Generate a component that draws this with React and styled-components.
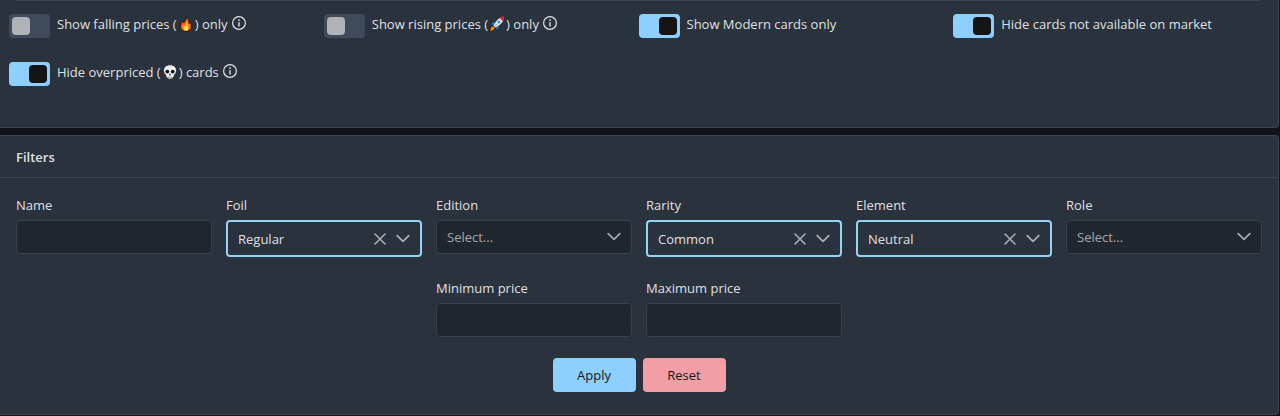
import React, { useState } from 'react'
import styled, { createGlobalStyle, css } from 'styled-components';

const GlobalStyle = createGlobalStyle`
    * {
        box-sizing: border-box;
    }
    body {
        margin: 0;
        background: #101317;
        color: rgba(255, 255, 255, 0.87);
        font-family: 'Open Sans', 'Noto Sans', sans-serif;
        font-size: 13px;
        line-height: 18px;
    }
    button, input, select {
        font: inherit;
        color: inherit;
    }
`

const FireIcon = () => (
    <Emoji viewBox="0 0 16 16" role="img" aria-label="fire">
        <path d="M8.6.6c.3 2-.6 3-1.700 4.300-.5.6-.8 1.200-.9 1.900C5.300 6.400 5 5.700 5 4.900 3.600 6.200 2.400 8 2.400 10.200c0 3.200 2.400 5.400 5.600 5.400s5.600-2.200 5.600-5.300c0-1.900-.7-3.300-1.500-4.400-.1.800-.4 1.300-1 1.700C11.200 4.800 10.700 2.200 8.600.6z" fill="#e8590c" stroke="#151515" strokeWidth=".8" />
        <path d="M8.500 4.200c.5 2 2.900 3.600 2.900 6.300 0 2.300-1.400 4-3.500 4s-3.500-1.500-3.500-3.600c0-1.300.5-2.200 1.100-2.900.2.800.6 1.300 1.200 1.500-.2-2.200 1.800-3 1.800-5.300z" fill="#ff9a1f" />
        <path d="M8.200 9.200c.3 1 1.700 1.700 1.700 3.200 0 1.200-.8 2.200-1.900 2.200s-2-.8-2-2c0-.8.300-1.300.7-1.700.2.400.4.600.8.700-.1-.9.300-1.600.7-2.400z" fill="#ffe867" />
    </Emoji>
)

const RocketIcon = () => (
    <Emoji viewBox="0 0 16 16" role="img" aria-label="rocket">
        <path d="M4.200 10.100c-1.800.3-3 2.300-3.400 5.100 2.600-.1 4.600-1.100 5.200-3.200z" fill="#ff8c1a" stroke="#151515" strokeWidth=".6" />
        <path d="M6.400 5.600C4.300 5.300 2.600 6.400 1.800 8.900l3.200.4zM10.400 9.600c.4 2.200-.8 3.800-3.300 4.600l-.4-3.200z" fill="#1c8fd6" stroke="#151515" strokeWidth=".6" />
        <path d="M15.200.8C10.900.7 7.500 2.900 4 9.700L6.300 12C13 8.600 15.300 5.200 15.200.8z" fill="#dce6ea" stroke="#151515" strokeWidth=".6" />
        <path d="M15.200.8c-1.800 0-3.300.3-4.700 1.100l3.600 3.600c.8-1.400 1.100-2.900 1.100-4.700z" fill="#e0244a" />
        <circle cx="9.900" cy="6.100" r="1.500" fill="#2b9fe0" />
        <path d="M4.800 11.200L8 8" stroke="#8b979e" strokeWidth="1" />
    </Emoji>
)

const SkullIcon = () => (
    <Emoji viewBox="0 0 16 16" role="img" aria-label="skull">
        <path d="M8 .8C4.200.8 1.500 3.200 1.500 6.500c0 1.700.6 3 1.700 4 .5.500.6 1 .6 1.700 0 .9.500 1.300 1.300 1.400.2 1 .7 1.600 1.500 1.600h2.800c.8 0 1.300-.6 1.500-1.600.8-.1 1.300-.5 1.300-1.400 0-.7.1-1.200.6-1.700 1.100-1 1.700-2.300 1.700-4C14.500 3.200 11.800.8 8 .8z" fill="#eceff1" stroke="#151515" strokeWidth=".8" />
        <circle cx="5.300" cy="7.600" r="1.900" fill="#151515" />
        <circle cx="10.700" cy="7.600" r="1.900" fill="#151515" />
        <path d="M8 9.300l-1.100 2h2.200z" fill="#151515" />
        <path d="M6.600 12.700v2M8 12.700v2M9.400 12.700v2" stroke="#5b6063" strokeWidth=".6" />
    </Emoji>
)

const InfoIcon = () => (
    <Info viewBox="0 0 14 14" role="img" aria-label="info">
        <circle cx="7" cy="7" r="6.400" fill="none" stroke="currentColor" strokeWidth="1.200" />
        <path d="M7 6.300v4.200" stroke="currentColor" strokeWidth="1.400" />
        <circle cx="7" cy="4.100" r=".9" fill="currentColor" />
    </Info>
)

const switches = [
    { id: 'falling', before: 'Show falling prices (', icon: <FireIcon />, after: ') only', info: true, on: false },
    { id: 'rising', before: 'Show rising prices (', icon: <RocketIcon />, after: ') only', info: true, on: false },
    { id: 'modern', before: 'Show Modern cards only', on: true },
    { id: 'market', before: 'Hide cards not available on market', on: true },
    { id: 'overpriced', before: 'Hide overpriced (', icon: <SkullIcon />, after: ') cards', info: true, on: true },
];

const Dropdown = ({ id, label, initial = '' }) => {
    const [value, setValue] = useState(initial);

    return (
        <Field>
            <label htmlFor={id}>{label}</label>
            <SelectBox $filled={!!value}>
                <select id={id} value={value} onChange={(e) => setValue(e.target.value)}>
                    <option value="">Select...</option>
                    {initial && <option value={initial}>{initial}</option>}
                </select>
                {value && (
                    <ClearButton type="button" aria-label={`Clear ${label}`} onClick={() => setValue('')}>
                        <svg width="12" height="12" viewBox="0 0 12 12">
                            <path d="M1 1l10 10M11 1L1 11" stroke="currentColor" strokeWidth="1.600" strokeLinecap="round" />
                        </svg>
                    </ClearButton>
                )}
                <Chevron viewBox="0 0 14 14">
                    <path d="M1.200 3.600L7 9.400l5.800-5.800" fill="none" stroke="currentColor" strokeWidth="1.800" strokeLinecap="round" strokeLinejoin="round" />
                </Chevron>
            </SelectBox>
        </Field>
    )
}

const App = () => {
    return (
        <Page>
            <GlobalStyle />
            <OptionsPanel>
                <Divider />
                <SwitchGrid>
                    {switches.map((item) => (
                        <SwitchRow key={item.id}>
                            <Switch type="checkbox" role="switch" id={item.id} defaultChecked={item.on} />
                            <SwitchLabel htmlFor={item.id}>
                                {item.before}{item.icon}{item.after}
                                {item.info && <InfoIcon />}
                            </SwitchLabel>
                        </SwitchRow>
                    ))}
                </SwitchGrid>
            </OptionsPanel>
            <FilterPanel>
                <PanelTitle>Filters</PanelTitle>
                <FilterForm onSubmit={(e) => e.preventDefault()}>
                    <FieldGrid>
                        <Field>
                            <label htmlFor="name">Name</label>
                            <TextInput id="name" type="text" />
                        </Field>
                        <Dropdown id="foil" label="Foil" initial="Regular" />
                        <Dropdown id="edition" label="Edition" />
                        <Dropdown id="rarity" label="Rarity" initial="Common" />
                        <Dropdown id="element" label="Element" initial="Neutral" />
                        <Dropdown id="role" label="Role" />
                        <Field $column={3}>
                            <label htmlFor="min">Minimum price</label>
                            <TextInput id="min" type="text" />
                        </Field>
                        <Field $column={4}>
                            <label htmlFor="max">Maximum price</label>
                            <TextInput id="max" type="text" />
                        </Field>
                    </FieldGrid>
                    <Actions>
                        <Button type="submit" $color="#8dd0ff">Apply</Button>
                        <Button type="reset" $color="#f19ea6">Reset</Button>
                    </Actions>
                </FilterForm>
            </FilterPanel>
        </Page>
    )
}

const Page = styled.main`
    display: flex;
    flex-direction: column;
    gap: 7px;
    padding-right: 1px;
`

const panel = css`
    background: #2a323d;
    border: 1px solid #3b444f;
    border-left: 0;
`

const OptionsPanel = styled.section`
    ${panel}
    border-top: 0;
    border-radius: 0 0 4px 0;
    padding-bottom: 41px;
`

const FilterPanel = styled.section`
    ${panel}
    border-radius: 0 4px 4px 0;
`

const Divider = styled.hr`
    height: 1px;
    margin: 0 17px 12px 16px;
    border: 0;
    background: #3b444f;
`

const SwitchGrid = styled.div`
    display: grid;
    grid-template-columns: repeat(4, 1fr);
    row-gap: 23px;
    padding: 0 10px 0 9px;
`

const SwitchRow = styled.div`
    display: flex;
    align-items: flex-end;
    gap: 7px;
    height: 25px;
`

const Switch = styled.input`
    appearance: none;
    display: flex;
    flex: none;
    width: 41px;
    height: 24px;
    margin: 0;
    padding: 3px;
    border-radius: 4px;
    background: #3f4b5b;
    cursor: pointer;

    &::before {
        content: '';
        width: 18px;
        height: 18px;
        border-radius: 4px;
        background: #afb3b8;
    }
    &:checked {
        justify-content: flex-end;
        background: #8dd0ff;
    }
    &:checked::before {
        background: #151515;
    }
`

const SwitchLabel = styled.label`
    display: flex;
    align-items: center;
    align-self: flex-start;
    height: 22px;
    white-space: pre;
`

const Emoji = styled.svg`
    width: 16px;
    height: 16px;
    margin: 0 1px;
`

const Info = styled.svg`
    width: 14px;
    height: 14px;
    margin: 0 0 2px 4px;
`

const PanelTitle = styled.h2`
    margin: 0;
    padding: 12px 16px 11px;
    border-bottom: 1px solid #3b444f;
    font-size: 13px;
    font-weight: 600;
    line-height: 18px;
`

const FilterForm = styled.form`
    padding: 18px 16px 22px;
`

const FieldGrid = styled.div`
    display: grid;
    grid-template-columns: repeat(6, 1fr);
    gap: 22px 14px;
`

const Field = styled.div`
    display: flex;
    flex-direction: column;
    gap: 6px;
    min-width: 0;
    grid-column: ${(props) => props.$column || 'auto'};
`

const TextInput = styled.input`
    width: 100%;
    height: 34px;
    padding: 0 10px;
    border: 1px solid #37414d;
    border-radius: 4px;
    background: #20262e;
`

const SelectBox = styled.div`
    display: grid;
    grid-template-columns: 1fr auto 34px;
    align-items: center;
    height: 34px;
    border: 1px solid #37414d;
    border-radius: 4px;
    background: #20262e;
    color: rgba(255, 255, 255, 0.6);

    select {
        grid-area: 1 / 1 / 2 / 4;
        appearance: none;
        width: 100%;
        height: 100%;
        padding: 0 10px;
        border: 0;
        background: transparent;
    }

    ${(props) => props.$filled && css`
        height: 37px;
        border: 2px solid #93d4f5;
        background: #2a323d;

        select {
            color: rgba(255, 255, 255, 0.87);
        }
    `}
`

const ClearButton = styled.button`
    grid-area: 1 / 2;
    display: flex;
    padding: 0;
    border: 0;
    background: transparent;
    cursor: pointer;
`

const Chevron = styled.svg`
    grid-area: 1 / 3;
    justify-self: center;
    width: 14px;
    height: 14px;
    pointer-events: none;
`

const Actions = styled.div`
    display: flex;
    justify-content: center;
    gap: 7px;
    margin-top: 21px;
`

const Button = styled.button`
    min-width: 83px;
    height: 34px;
    padding: 0 16px;
    border: 0;
    border-radius: 4px;
    background: ${(props) => props.$color};
    color: #151515;
    cursor: pointer;
`

export default App
